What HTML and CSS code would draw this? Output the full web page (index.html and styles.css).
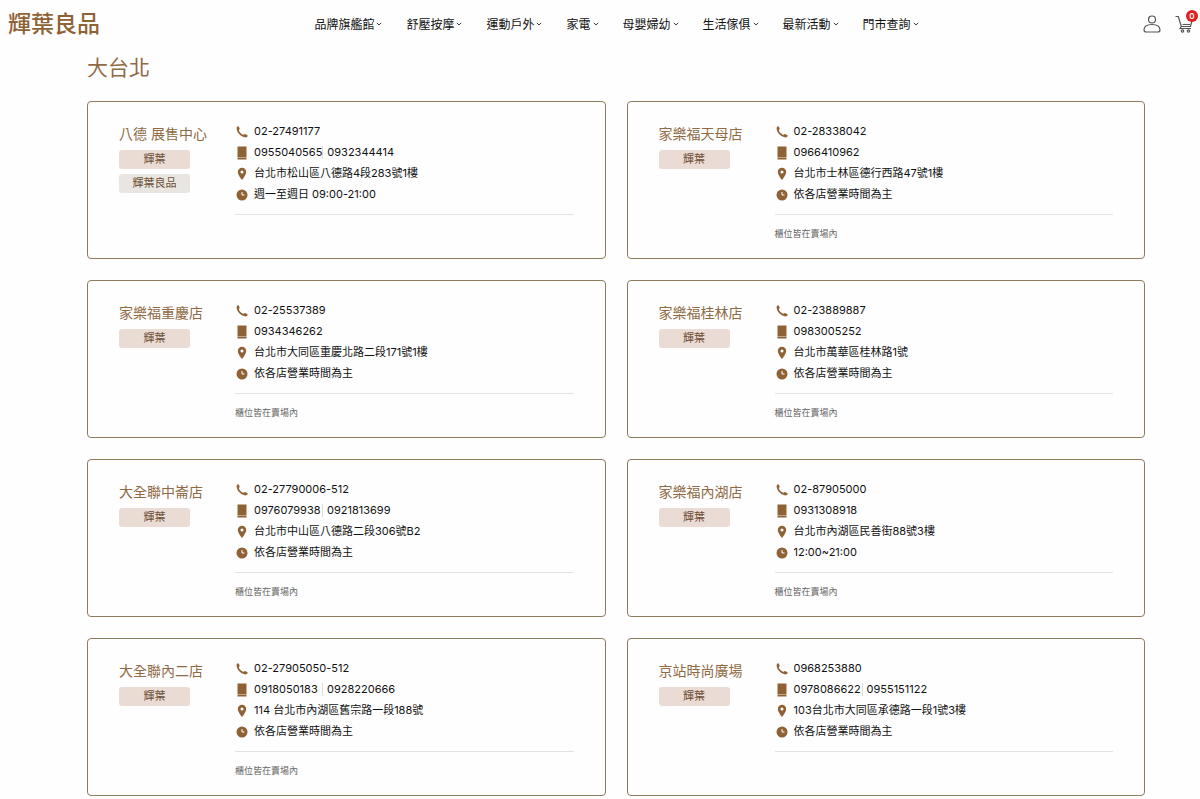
FILE: index.html
```html
<!DOCTYPE html>
<html lang="zh-Hant">
<head>
  <meta charset="UTF-8">
  <meta name="viewport" content="width=device-width, initial-scale=1">
  <title>門市查詢 - 輝葉良品</title>
  <link rel="stylesheet" href="styles.css">
</head>
<body>

<!-- icons -->
<svg class="sprite" aria-hidden="true">
  <symbol id="chevron" viewBox="0 0 6 4"><path d="M.8.8 3 3 5.200.8" fill="none" stroke="currentColor" stroke-width=".8"/></symbol>
  <symbol id="phone" viewBox="0 0 12 14"><path d="M.8 2.300C1.200 1.700 1.800 1.100 2.300 1.300c.5.3 1.200 1.700 1.400 2.400.1.6-.9 1-.8 1.700.3 1.400 2.500 3.700 4.200 4.300.7.100 1.300-1 1.900-.8.8.2 2.200 1 2.600 1.500.3.6-.5 1.500-1.200 1.900C6.500 13.400-.6 7.200.8 2.300z"/></symbol>
  <symbol id="mobile" viewBox="0 0 12 14"><path d="M1.500.5h9v10.800h-9zM1.500 12h9v1.500h-9z"/><path d="M1.500 11.300h9v.7h-9z" opacity=".6"/></symbol>
  <symbol id="pin" viewBox="0 0 12 14"><path fill-rule="evenodd" d="M6 .8a4.200 4.200 0 0 0-4.200 4.200C1.800 8 6 13 6 13s4.200-5 4.200-8A4.200 4.200 0 0 0 6 .8zm0 2.700a1.500 1.500 0 1 1 0 3 1.500 1.500 0 0 1 0-3z"/></symbol>
  <symbol id="clock" viewBox="0 0 12 14"><circle cx="6" cy="7" r="5.500"/><path d="M6 4v3h2.500" fill="none" stroke="#fff"/></symbol>
</svg>

<header class="header">
  <a class="logo" href="#">輝葉良品</a>
  <nav class="nav">
    <a href="#">品牌旗艦館<svg><use href="#chevron"/></svg></a>
    <a href="#">舒壓按摩<svg><use href="#chevron"/></svg></a>
    <a href="#">運動戶外<svg><use href="#chevron"/></svg></a>
    <a href="#">家電<svg><use href="#chevron"/></svg></a>
    <a href="#">母嬰婦幼<svg><use href="#chevron"/></svg></a>
    <a href="#">生活傢俱<svg><use href="#chevron"/></svg></a>
    <a href="#">最新活動<svg><use href="#chevron"/></svg></a>
    <a href="#">門市查詢<svg><use href="#chevron"/></svg></a>
  </nav>
  <div class="tools">
    <a class="user" href="#" aria-label="會員">
      <svg width="18" height="18" viewBox="0 0 18 18"><circle cx="9" cy="4.500" r="3.500"/><path d="M3.500 17C1.800 17 1 16.300 1 15c0-3.400 3-5.500 8-5.500s8 2.100 8 5.500c0 1.300-.8 2-2.500 2z"/></svg>
    </a>
    <a class="cart" href="#" aria-label="購物車">
      <svg width="18" height="18" viewBox="0 0 18 18"><path d="M.5 1.500h2.800l3 10h9.200l1.500-6M6.300 11.500 5 13.500h11M7.500 9.500h7.500"/><circle cx="7.500" cy="16" r="1.200"/><circle cx="13.500" cy="16" r="1.200"/></svg>
      <span class="count">0</span>
    </a>
  </div>
</header>

<main class="stores">
  <h2 class="area">大台北</h2>
  <div class="list">

    <article class="store">
      <div class="name">
        <h3>八德 展售中心</h3>
        <span class="tag">輝葉</span>
        <span class="tag gray">輝葉良品</span>
      </div>
      <div class="info">
        <ul>
          <li><svg><use href="#phone"/></svg>02-27491177</li>
          <li><svg><use href="#mobile"/></svg><span class="num">0955040565</span>0932344414</li>
          <li><svg><use href="#pin"/></svg>台北市松山區八德路4段283號1樓</li>
          <li><svg><use href="#clock"/></svg>週一至週日 09:00-21:00</li>
        </ul>
      </div>
    </article>

    <article class="store">
      <div class="name">
        <h3>家樂福天母店</h3>
        <span class="tag">輝葉</span>
      </div>
      <div class="info">
        <ul>
          <li><svg><use href="#phone"/></svg>02-28338042</li>
          <li><svg><use href="#mobile"/></svg>0966410962</li>
          <li><svg><use href="#pin"/></svg>台北市士林區德行西路47號1樓</li>
          <li><svg><use href="#clock"/></svg>依各店營業時間為主</li>
        </ul>
        <p class="note">櫃位皆在賣場內</p>
      </div>
    </article>

    <article class="store">
      <div class="name">
        <h3>家樂福重慶店</h3>
        <span class="tag">輝葉</span>
      </div>
      <div class="info">
        <ul>
          <li><svg><use href="#phone"/></svg>02-25537389</li>
          <li><svg><use href="#mobile"/></svg>0934346262</li>
          <li><svg><use href="#pin"/></svg>台北市大同區重慶北路二段171號1樓</li>
          <li><svg><use href="#clock"/></svg>依各店營業時間為主</li>
        </ul>
        <p class="note">櫃位皆在賣場內</p>
      </div>
    </article>

    <article class="store">
      <div class="name">
        <h3>家樂福桂林店</h3>
        <span class="tag">輝葉</span>
      </div>
      <div class="info">
        <ul>
          <li><svg><use href="#phone"/></svg>02-23889887</li>
          <li><svg><use href="#mobile"/></svg>0983005252</li>
          <li><svg><use href="#pin"/></svg>台北市萬華區桂林路1號</li>
          <li><svg><use href="#clock"/></svg>依各店營業時間為主</li>
        </ul>
        <p class="note">櫃位皆在賣場內</p>
      </div>
    </article>

    <article class="store">
      <div class="name">
        <h3>大全聯中崙店</h3>
        <span class="tag">輝葉</span>
      </div>
      <div class="info">
        <ul>
          <li><svg><use href="#phone"/></svg>02-27790006-512</li>
          <li><svg><use href="#mobile"/></svg><span class="num">0976079938</span>0921813699</li>
          <li><svg><use href="#pin"/></svg>台北市中山區八德路二段306號B2</li>
          <li><svg><use href="#clock"/></svg>依各店營業時間為主</li>
        </ul>
        <p class="note">櫃位皆在賣場內</p>
      </div>
    </article>

    <article class="store">
      <div class="name">
        <h3>家樂福內湖店</h3>
        <span class="tag">輝葉</span>
      </div>
      <div class="info">
        <ul>
          <li><svg><use href="#phone"/></svg>02-87905000</li>
          <li><svg><use href="#mobile"/></svg>0931308918</li>
          <li><svg><use href="#pin"/></svg>台北市內湖區民善街88號3樓</li>
          <li><svg><use href="#clock"/></svg>12:00~21:00</li>
        </ul>
        <p class="note">櫃位皆在賣場內</p>
      </div>
    </article>

    <article class="store">
      <div class="name">
        <h3>大全聯內二店</h3>
        <span class="tag">輝葉</span>
      </div>
      <div class="info">
        <ul>
          <li><svg><use href="#phone"/></svg>02-27905050-512</li>
          <li><svg><use href="#mobile"/></svg><span class="num">0918050183</span>0928220666</li>
          <li><svg><use href="#pin"/></svg>114 台北市內湖區舊宗路一段188號</li>
          <li><svg><use href="#clock"/></svg>依各店營業時間為主</li>
        </ul>
        <p class="note">櫃位皆在賣場內</p>
      </div>
    </article>

    <article class="store">
      <div class="name">
        <h3>京站時尚廣場</h3>
        <span class="tag">輝葉</span>
      </div>
      <div class="info">
        <ul>
          <li><svg><use href="#phone"/></svg>0968253880</li>
          <li><svg><use href="#mobile"/></svg><span class="num">0978086622</span>0955151122</li>
          <li><svg><use href="#pin"/></svg>103台北市大同區承德路一段1號3樓</li>
          <li><svg><use href="#clock"/></svg>依各店營業時間為主</li>
        </ul>
      </div>
    </article>

  </div>
</main>

</body>
</html>
```
FILE: styles.css
```css
* {
	margin: 0;
	padding: 0;
	box-sizing: border-box;
}

body {
	background: #fefefe;
	color: #111;
	font: 11px/21px Inter, "Noto Sans CJK TC", sans-serif;
}

a {
	color: inherit;
	text-decoration: none;
}

ul {
	list-style: none;
}

.sprite {
	display: none;
}

/* header */
.header {
	display: flex;
	align-items: center;
	justify-content: space-between;
	height: 48px;
	padding: 0 7px 0 8px;
}

.logo {
	color: #8f6236;
	font-size: 23px;
	font-weight: 500;
	line-height: 48px;
}

.nav {
	display: flex;
	gap: 24px;
	font-size: 12px;
}

.nav a {
	display: flex;
	align-items: center;
	gap: 2px;
}

.nav svg {
	width: 6px;
	height: 4px;
}

.tools {
	display: flex;
	gap: 14px;
	padding-left: 10px;
}

.tools a {
	position: relative;
	display: block;
	height: 18px;
}

.tools svg {
	display: block;
	fill: none;
	stroke: #555;
	stroke-width: 1.2;
}

.count {
	position: absolute;
	top: -5px;
	right: -5px;
	width: 12px;
	height: 12px;
	border-radius: 50%;
	background: #e02020;
	color: #fff;
	font-size: 8px;
	font-weight: 600;
	line-height: 12px;
	text-align: center;
}

/* store list */
.stores {
	padding: 0 55px 4px 87px;
}

.area {
	padding: 5px 0 18px;
	color: #8f6a45;
	font-size: 21px;
	font-weight: 400;
	line-height: 30px;
}

.list {
	display: grid;
	grid-template-columns: 1fr 1fr;
	grid-auto-rows: 1fr;
	gap: 21px;
}

.store {
	display: flex;
	padding: 19px 31px 15px;
	border: 1px solid #8d7b5e;
	border-radius: 4px;
}

.name {
	flex: 0 0 116px;
}

.name h3 {
	margin-bottom: 3px;
	color: #8f6a45;
	font-size: 14px;
	font-weight: 400;
	line-height: 26px;
}

.tag {
	display: block;
	width: 71px;
	margin-bottom: 5px;
	border-radius: 3px;
	background: #ebdbd5;
	color: #6b4e36;
	line-height: 19px;
	text-align: center;
}

.tag.gray {
	background: #e9e6e1;
}

.info {
	flex: 1;
}

.info ul {
	padding-bottom: 9px;
	border-bottom: 1px solid #e2e2e2;
}

.info li {
	display: flex;
	align-items: center;
}

.info svg {
	width: 12px;
	height: 14px;
	margin: 0 6px 0 1px;
	fill: #8f6236;
}

.num {
	min-width: 69px;
	margin-right: 4px;
	border-right: 1px solid #ddd;
	line-height: 13px;
}

.note {
	margin-top: 9px;
	color: #666;
	font-size: 9px;
	line-height: 19px;
}
```
